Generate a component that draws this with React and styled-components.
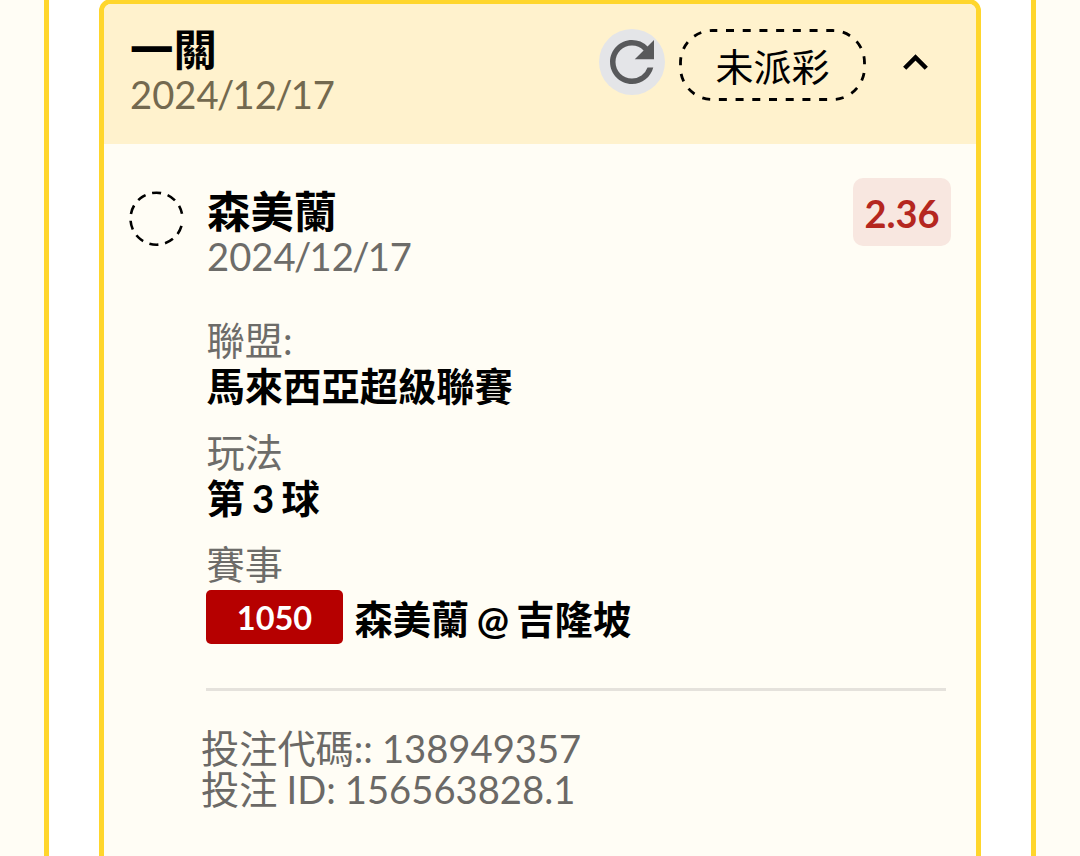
import styled, { createGlobalStyle } from 'styled-components';
import { MdRefresh } from 'react-icons/md';

const GlobalStyle = createGlobalStyle`
  * {
    box-sizing: border-box;
  }
  body {
    margin: 0;
    background-color: #fffdf5;
    font-family: Lato, 'Noto Sans CJK TC', sans-serif;
    color: #000;
  }
`;

const Page = styled.main`
  height: 856px;
  padding: 0 44px;
  overflow: hidden;
`;

const Panel = styled.section`
  display: flow-root;
  height: 100%;
  padding: 0 50px;
  border: solid #ffd62c;
  border-width: 0 5px;
  background-color: #fff;
`;

const Card = styled.article`
  height: 880px;
  margin-top: -1px;
  border: 5px solid #ffd62c;
  border-radius: 12px;
  background-color: #fffdf5;
  overflow: hidden;
`;

const Header = styled.header`
  display: flex;
  height: 140px;
  padding: 22px 36px 0 26px;
  background-color: #fff2cd;
`;

const Heading = styled.div`
  flex: 1;
`;

const Title = styled.h2`
  margin: 0;
  font-size: 43.4px;
  line-height: 46px;
  font-weight: 700;
`;

const DateText = styled.p`
  margin: -1px 0 0;
  font-size: 38.2px;
  line-height: 46px;
  color: ${({ $header }) => ($header ? '#73694f' : '#6d6c69')};
`;

const Slash = styled.span`
  margin: 0 -1.7px;
`;

const Actions = styled.div`
  display: flex;
  align-items: flex-start;
`;

const RefreshButton = styled.button`
  display: flex;
  align-items: center;
  justify-content: center;
  width: 66px;
  height: 66px;
  margin: 3px 14px 0 0;
  padding: 0;
  border: none;
  border-radius: 50%;
  background-color: #e4e5e8;
  color: #58595b;
  cursor: pointer;
`;

const Status = styled.div`
  display: flex;
  position: relative;
  align-items: center;
  justify-content: center;
  width: 187px;
  height: 72px;
  margin-top: 3px;
  padding-top: 2px;
  font-size: 38px;
  line-height: 46px;
`;

const StatusOutline = styled.svg`
  position: absolute;
  top: 0;
  left: 0;
`;

const ToggleButton = styled.button`
  display: flex;
  margin: 12px 0 0 25px;
  padding: 0;
  border: none;
  background: none;
  color: #000;
  cursor: pointer;
`;

const Body = styled.div`
  padding: 34px 25px 0 24px;
`;

const Selection = styled.div`
  display: flex;
  align-items: flex-start;
`;

const Pending = styled.svg`
  margin: 12px 21px 0 0;
`;

const SelectionInfo = styled.div`
  flex: 1;
  padding: 10px 0 0 1px;
`;

const Odds = styled.div`
  width: 98px;
  height: 68px;
  border-radius: 10px;
  background-color: #f8e7e0;
  color: #b5271f;
  font-size: 38px;
  font-weight: 700;
  line-height: 70px;
  text-align: center;
`;

const Details = styled.div`
  display: flex;
  flex-direction: column;
  gap: 20px;
  margin: 38px 5px 0 78px;
  padding-bottom: 44px;
  border-bottom: 3px solid #e5e2dc;
`;

const Label = styled.p`
  margin: 0 0 0 0.5px;
  font-size: 38.2px;
  line-height: 46px;
  color: #6d6c69;
`;

const Value = styled.p`
  margin: 0 0 0 0.5px;
  font-size: 38.3px;
  line-height: 46px;
  font-weight: 700;
  word-spacing: -2px;
`;

const Match = styled.div`
  display: flex;
  align-items: center;
  gap: 11px;
  margin-top: 3px;

  ${Value} {
    padding-top: 3px;
  }
`;

const MatchCode = styled.span`
  width: 137px;
  height: 54px;
  border-radius: 5px;
  background-color: #b60000;
  color: #fff;
  font-size: 32.5px;
  font-weight: 700;
  line-height: 56px;
  text-align: center;
`;

const References = styled.div`
  margin: 37px 0 0 73px;
  font-size: 38.2px;
  line-height: 41px;
  color: #6b6966;
`;

const Reference = styled.p`
  margin: 0;
  word-spacing: -0.7px;
`;

function BetDate({ parts, header }) {
  const [year, month, day] = parts;

  return (
    <DateText $header={header}>
      {year}
      <Slash>/</Slash>
      {month}
      <Slash>/</Slash>
      {day}
    </DateText>
  );
}

function Field({ label, children }) {
  return (
    <div>
      <Label>{label}</Label>
      {children}
    </div>
  );
}

const betDate = ['2024', '12', '17'];

export default function App() {
  return (
    <>
      <GlobalStyle />
      <Page>
        <Panel>
          <Card>
            <Header>
              <Heading>
                <Title>一關</Title>
                <BetDate parts={betDate} header />
              </Heading>
              <Actions>
                <RefreshButton aria-label='重新整理'>
                  <MdRefresh size={66} />
                </RefreshButton>
                <Status>
                  <StatusOutline width='187' height='72' fill='none'>
                    <rect
                      x='1.5'
                      y='1.5'
                      width='184'
                      height='69'
                      rx='32'
                      stroke='#000'
                      strokeWidth='2.8'
                      strokeDasharray='8 8.71'
                      strokeDashoffset='3.2'
                    />
                  </StatusOutline>
                  未派彩
                </Status>
                <ToggleButton aria-label='收合'>
                  <svg width='49' height='49' viewBox='0 0 24 24' fill='none'>
                    <path
                      d='M6.7 14.8L12 9.5L17.3 14.8'
                      stroke='currentColor'
                      strokeWidth='2.2'
                    />
                  </svg>
                </ToggleButton>
              </Actions>
            </Header>
            <Body>
              <Selection>
                <Pending width='57' height='58' viewBox='-28.5 -28.7 57 58' fill='none'>
                  <path
                    d='M24.99 7.17A26 26 0 1 1 25.52 -4.96'
                    stroke='#000'
                    strokeWidth='2.6'
                    strokeDasharray='9 6.8'
                  />
                </Pending>
                <SelectionInfo>
                  <Title>森美蘭</Title>
                  <BetDate parts={betDate} />
                </SelectionInfo>
                <Odds>2.36</Odds>
              </Selection>
              <Details>
                <Field label='聯盟:'>
                  <Value>馬來西亞超級聯賽</Value>
                </Field>
                <Field label='玩法'>
                  <Value>第 3 球</Value>
                </Field>
                <Field label='賽事'>
                  <Match>
                    <MatchCode>1050</MatchCode>
                    <Value>森美蘭 @ 吉隆坡</Value>
                  </Match>
                </Field>
              </Details>
              <References>
                <Reference>投注代碼:: 138949357</Reference>
                <Reference>投注 ID: 156563828.1</Reference>
              </References>
            </Body>
          </Card>
        </Panel>
      </Page>
    </>
  );
}
